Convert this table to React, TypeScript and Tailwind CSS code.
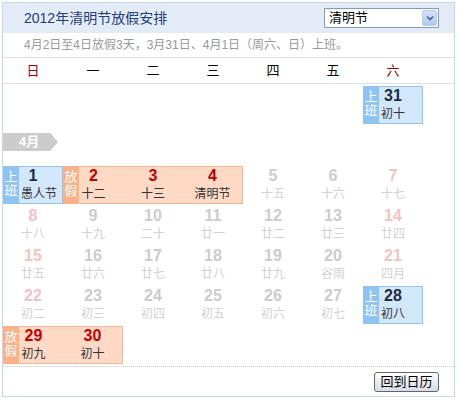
import React from 'react';

type Kind = 'empty' | 'faded' | 'work' | 'holiday';

interface Day {
  d?: number;
  lunar?: string;
  kind: Kind;
  weekend?: boolean;
  start?: boolean;
  end?: boolean;
  shift?: boolean;
}

const font = "font-['Liberation_Sans','Noto_Sans_CJK_SC',sans-serif]";

const weekdays = ['日', '一', '二', '三', '四', '五', '六'];

const empty: Day = { kind: 'empty' };

const fade = (d: number, lunar: string, weekend = false): Day => ({
  d,
  lunar,
  kind: 'faded',
  weekend,
});

const marchRow: Day[] = [
  empty,
  empty,
  empty,
  empty,
  empty,
  empty,
  { d: 31, lunar: '初十', kind: 'work', start: true, end: true },
];

const aprilRows: Day[][] = [
  [
    { d: 1, lunar: '愚人节', kind: 'work', start: true, end: true, shift: true },
    { d: 2, lunar: '十二', kind: 'holiday', start: true },
    { d: 3, lunar: '十三', kind: 'holiday' },
    { d: 4, lunar: '清明节', kind: 'holiday', end: true },
    fade(5, '十五'),
    fade(6, '十六'),
    fade(7, '十七', true),
  ],
  [
    fade(8, '十八', true),
    fade(9, '十九'),
    fade(10, '二十'),
    fade(11, '廿一'),
    fade(12, '廿二'),
    fade(13, '廿三'),
    fade(14, '廿四', true),
  ],
  [
    fade(15, '廿五', true),
    fade(16, '廿六'),
    fade(17, '廿七'),
    fade(18, '廿八'),
    fade(19, '廿九'),
    fade(20, '谷雨'),
    fade(21, '四月', true),
  ],
  [
    fade(22, '初二', true),
    fade(23, '初三'),
    fade(24, '初四'),
    fade(25, '初五'),
    fade(26, '初六'),
    fade(27, '初七'),
    { d: 28, lunar: '初八', kind: 'work', start: true, end: true },
  ],
  [
    { d: 29, lunar: '初九', kind: 'holiday', start: true },
    { d: 30, lunar: '初十', kind: 'holiday', end: true },
    empty,
    empty,
    empty,
    empty,
    empty,
  ],
];

const DayCell: React.FC<{ day: Day }> = ({ day }) => {
  if (day.kind === 'empty') return <div className="h-[38px]" />;

  const isWork = day.kind === 'work';
  const isHoliday = day.kind === 'holiday';
  const marked = isWork || isHoliday;

  let box = 'relative h-[38px] text-center';
  box += marked ? ' pt-0' : ' pt-[1px]';
  if (isWork) box += ' bg-[#d3e7fb] border-y border-[#93c3f0]';
  if (isHoliday) box += ' bg-[#fdd9c6] border-y border-[#f5b590]';
  if (marked && day.start) box += ' border-l';
  if (marked && day.end) box += ' border-r';

  let numColor = 'text-[#cccccc]';
  if (day.kind === 'faded' && day.weekend) numColor = 'text-[#f0c3c3]';
  if (isWork) numColor = 'text-[#1f2a44]';
  if (isHoliday) numColor = 'text-[#c40000]';

  const lunarColor = day.kind === 'faded' ? 'text-[#d2d2d2]' : 'text-[#333333]';

  return (
    <div className={box}>
      {/* 上班 / 放假 tag strip */}
      {day.start && marked && (
        <div
          className={`absolute left-[-1px] top-[-1px] bottom-[-1px] w-[16px] pt-[4px] text-[13px] leading-[14px] text-white ${
            isWork ? 'bg-[#8ec3f4]' : 'bg-[#fcb088]'
          }`}
        >
          <div>{isWork ? '上' : '放'}</div>
          <div>{isWork ? '班' : '假'}</div>
        </div>
      )}
      <div className={`text-[16px] leading-[18px] font-bold ${numColor}`}>
        {day.d}
      </div>
      <div
        className={`text-[12px] leading-[18px] ${lunarColor} ${
          day.shift ? 'pl-[12px]' : ''
        }`}
      >
        {day.lunar}
      </div>
    </div>
  );
};

const WeekRow: React.FC<{ days: Day[] }> = ({ days }) => (
  <div className="grid w-[420px] grid-cols-7">
    {days.map((day, i) => (
      <DayCell key={i} day={day} />
    ))}
  </div>
);

export default function App() {
  return (
    <div className={`bg-white pl-[2px] pt-[2px] ${font}`}>
      <div className="w-[453px] border border-[#c6d6ec]">
        {/* Title bar */}
        <div className="flex h-[30px] items-center justify-between bg-[#e3ebf6] pl-[21px] pr-[15px]">
          <span className="text-[14px] text-[#1e3d7b]">2012年清明节放假安排</span>
          <div className="flex h-[20px] w-[115px] items-stretch border border-[#7f9db9] bg-white p-[1px]">
            <span className="flex-1 pl-[3px] text-[13px] leading-[16px] text-black">
              清明节
            </span>
            <div className="flex w-[15px] items-center justify-center rounded-[2px] border border-[#b8ccf4] bg-gradient-to-b from-[#d3e0fb] to-[#b4c9f4]">
              <svg width="8" height="6" viewBox="0 0 8 6">
                <path
                  d="M1 1.5 L4 4.5 L7 1.5"
                  fill="none"
                  stroke="#4d6185"
                  strokeWidth="1.6"
                />
              </svg>
            </div>
          </div>
        </div>

        {/* Note */}
        <div className="flex h-[25px] items-center border-b border-[#d8e2ef] pl-[21px] text-[12px] text-[#999999]">
          4月2日至4日放假3天，3月31日、4月1日（周六、日）上班。
        </div>

        {/* Weekdays */}
        <div className="h-[26px] border-b border-[#d8e2ef]">
          <div className="grid h-full w-[420px] grid-cols-7 items-center">
            {weekdays.map((w, i) => (
              <div
                key={w}
                className={`text-center text-[13px] ${
                  i === 0 || i === 6 ? 'text-[#a30000]' : 'text-black'
                }`}
              >
                {w}
              </div>
            ))}
          </div>
        </div>

        {/* Days */}
        <div className="flex flex-col gap-[2px] py-[2px]">
          <WeekRow days={marchRow} />
          <div className="h-[38px] pt-[7px]">
            <div className="h-[18px] w-[55px] bg-[#cccccc] pl-[16px] text-[13px] font-bold leading-[18px] text-white [clip-path:polygon(0_0,86%_0,100%_50%,86%_100%,0_100%)]">
              4月
            </div>
          </div>
          {aprilRows.map((row, i) => (
            <WeekRow key={i} days={row} />
          ))}
        </div>

        {/* Footer */}
        <div className="flex justify-end border-t border-dotted border-[#cccccc] pb-[4px] pr-[15px] pt-[5px]">
          <button className="h-[20px] w-[65px] rounded-[3px] border border-[#5b6778] bg-gradient-to-b from-white to-[#d9dae6] text-[13px] leading-[18px] text-black">
            回到日历
          </button>
        </div>
      </div>
    </div>
  );
}
